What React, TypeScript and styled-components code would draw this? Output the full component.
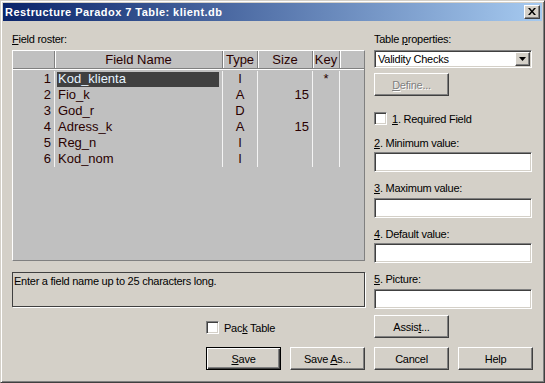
import styled, { createGlobalStyle } from "styled-components";

const GlobalStyle = createGlobalStyle`
  html, body {
    margin: 0;
    padding: 0;
    background: #d4d0c8;
  }
  * {
    box-sizing: border-box;
  }
`;

const Window = styled.div`
  width: 545px;
  height: 383px;
  background: #d4d0c8;
  border-top: 1px solid #d4d0c8;
  border-left: 1px solid #d4d0c8;
  border-right: 1px solid #404040;
  border-bottom: 1px solid #404040;
  box-shadow: inset 1px 1px 0 #fff, inset -1px -1px 0 #808080;
  padding: 2px 2px 0 2px;
  font-family: "Liberation Sans", Arial, sans-serif;
  font-size: 11px;
  letter-spacing: -0.25px;
  color: #000;
  display: flex;
  flex-direction: column;
`;

const TitleBar = styled.div`
  height: 18px;
  display: flex;
  align-items: center;
  justify-content: space-between;
  padding: 0 2px 0 2px;
  background: linear-gradient(to right, #0a246a, #a6caf0);
`;

const TitleText = styled.span`
  color: #fff;
  font-weight: bold;
  font-size: 11px;
  letter-spacing: 0.45px;
`;

const CloseButton = styled.div`
  width: 16px;
  height: 14px;
  background: #d4d0c8;
  border-top: 1px solid #fff;
  border-left: 1px solid #fff;
  border-right: 1px solid #404040;
  border-bottom: 1px solid #404040;
  box-shadow: inset -1px -1px 0 #808080;
  display: flex;
  align-items: center;
  justify-content: center;
  padding-bottom: 1px;
`;

const Body = styled.div`
  display: flex;
  gap: 9px;
  padding: 12px 9px 0 9px;
`;

const LeftColumn = styled.div`
  width: 353px;
  flex-shrink: 0;
  display: flex;
  flex-direction: column;
`;

const RightColumn = styled.div`
  width: 159px;
  flex-shrink: 0;
  display: flex;
  flex-direction: column;
`;

const Label = styled.div<{ $mt?: number }>`
  height: 13px;
  line-height: 13px;
  margin-top: ${({ $mt }) => $mt ?? 0}px;
  white-space: nowrap;
`;

const Grid = styled.div`
  margin-top: 4px;
  height: 211px;
  background: #c0c0c0;
  border-top: 1px solid #fff;
  border-left: 1px solid #fff;
  border-right: 1px solid #808080;
  border-bottom: 1px solid #808080;
  font-size: 13px;
  letter-spacing: 0;
  color: #2a0000;
`;

const HeaderRow = styled.div`
  display: flex;
  height: 18px;
  border-bottom: 1px solid #808080;
  box-shadow: 0 1px 0 #fff;
  margin-bottom: 2px;
`;

const HeaderCell = styled.div<{ $w?: number }>`
  ${({ $w }) => ($w ? `width: ${$w}px;` : "flex: 1;")}
  flex-shrink: 0;
  height: 17px;
  line-height: 17px;
  text-align: center;
  border-right: 1px solid #808080;
  box-shadow: inset 1px 0 0 #fff;
  &:first-child {
    box-shadow: none;
  }
  &:last-child {
    border-right: none;
  }
`;

const DataRow = styled.div`
  display: flex;
  height: 16px;
`;

const DataCell = styled.div<{ $w: number; $align?: string; $pad?: number }>`
  width: ${({ $w }) => $w}px;
  flex-shrink: 0;
  height: 16px;
  line-height: 16px;
  text-align: ${({ $align }) => $align ?? "left"};
  padding: 0 ${({ $pad }) => $pad ?? 0}px;
  border-right: 1px solid #f4f4f4;
  white-space: nowrap;
`;

const NameCell = styled(DataCell)`
  padding: 0 3px 0 2px;
`;

const Highlight = styled.div<{ $on?: boolean }>`
  margin-top: 1px;
  height: 15px;
  line-height: 14px;
  padding-left: 1px;
  background: ${({ $on }) => ($on ? "#404040" : "transparent")};
  color: ${({ $on }) => ($on ? "#e6f4ff" : "inherit")};
`;

const StatusBox = styled.div`
  margin-top: 11px;
  height: 35px;
  border: 1px solid #404040;
  box-shadow: 1px 1px 0 #fff;
  padding: 2px 1px;
  line-height: 13px;
`;

const BottomGroup = styled.div`
  align-self: flex-end;
  width: 159px;
  display: flex;
  flex-direction: column;
`;

const CheckRow = styled.div<{ $mt: number }>`
  display: flex;
  align-items: center;
  gap: 5px;
  margin-top: ${({ $mt }) => $mt}px;
  height: 13px;
`;

const CheckBox = styled.div`
  width: 13px;
  height: 13px;
  background: #fff;
  border-top: 1px solid #808080;
  border-left: 1px solid #808080;
  border-right: 1px solid #fff;
  border-bottom: 1px solid #fff;
  box-shadow: inset 1px 1px 0 #404040, inset -1px -1px 0 #d4d0c8;
`;

const ButtonRow = styled.div<{ $mt: number }>`
  display: flex;
  justify-content: space-between;
  margin-top: ${({ $mt }) => $mt}px;
`;

const Button = styled.div<{ $default?: boolean; $disabled?: boolean; $mt?: number }>`
  width: 75px;
  height: 23px;
  margin-top: ${({ $mt }) => $mt ?? 0}px;
  display: flex;
  align-items: center;
  justify-content: center;
  background: #d4d0c8;
  border: 1px solid ${({ $default }) => ($default ? "#000" : "transparent")};
  box-shadow: ${({ $default }) =>
    $default
      ? "inset 1px 1px 0 #fff, inset -1px -1px 0 #404040, inset -2px -2px 0 #808080"
      : "inset 0 0 0 0 transparent"};
  ${({ $default }) =>
    !$default &&
    `border-top-color: #fff; border-left-color: #fff; border-right-color: #404040; border-bottom-color: #404040; box-shadow: inset -1px -1px 0 #808080;`}
  color: ${({ $disabled }) => ($disabled ? "#808080" : "#000")};
  text-shadow: ${({ $disabled }) => ($disabled ? "1px 1px 0 #fff" : "none")};
`;

const Combo = styled.div`
  margin-top: 4px;
  width: 158px;
  height: 18px;
  background: #fff;
  border-top: 1px solid #808080;
  border-left: 1px solid #808080;
  border-right: 1px solid #fff;
  border-bottom: 1px solid #fff;
  box-shadow: inset 1px 1px 0 #404040, inset -1px -1px 0 #d4d0c8;
  display: flex;
  align-items: center;
  justify-content: space-between;
  padding: 1px 1px 1px 3px;
`;

const ComboArrow = styled.div`
  width: 15px;
  height: 14px;
  background: #d4d0c8;
  border-top: 1px solid #fff;
  border-left: 1px solid #fff;
  border-right: 1px solid #404040;
  border-bottom: 1px solid #404040;
  box-shadow: inset -1px -1px 0 #808080;
  display: flex;
  align-items: center;
  justify-content: center;
`;

const TextInput = styled.div<{ $mt: number }>`
  margin-top: ${({ $mt }) => $mt}px;
  width: 158px;
  height: 20px;
  background: #fff;
  border-top: 1px solid #808080;
  border-left: 1px solid #808080;
  border-right: 1px solid #fff;
  border-bottom: 1px solid #fff;
  box-shadow: inset 1px 1px 0 #404040, inset -1px -1px 0 #d4d0c8;
`;

const U = styled.span`
  text-decoration: underline;
`;

const columns = [42, 168, 35, 55, 27];

const rows = [
  { n: 1, name: "Kod_klienta", type: "I", size: "", key: "*" },
  { n: 2, name: "Fio_k", type: "A", size: "15", key: "" },
  { n: 3, name: "God_r", type: "D", size: "", key: "" },
  { n: 4, name: "Adress_k", type: "A", size: "15", key: "" },
  { n: 5, name: "Reg_n", type: "I", size: "", key: "" },
  { n: 6, name: "Kod_nom", type: "I", size: "", key: "" },
];

const fields = [
  { k: "2", rest: ". Minimum value:", mt: 12, it: 2 },
  { k: "3", rest: ". Maximum value:", mt: 10, it: 3 },
  { k: "4", rest: ". Default value:", mt: 10, it: 2 },
  { k: "5", rest: ". Picture:", mt: 10, it: 3 },
];

export default function App() {
  return (
    <>
      <GlobalStyle />
      <Window>
        <TitleBar>
          <TitleText>Restructure Paradox 7 Table: klient.db</TitleText>
          <CloseButton>
            <svg width="8" height="7" viewBox="0 0 8 7">
              <path d="M0 0h2l2 2.4L6 0h2L5 3.5 8 7H6L4 4.6 2 7H0l3-3.5z" fill="#000" />
            </svg>
          </CloseButton>
        </TitleBar>
        <Body>
          <LeftColumn>
            <Label>
              <U>F</U>ield roster:
            </Label>
            <Grid>
              <HeaderRow>
                <HeaderCell $w={42} />
                <HeaderCell $w={168}>Field Name</HeaderCell>
                <HeaderCell $w={35}>Type</HeaderCell>
                <HeaderCell $w={55}>Size</HeaderCell>
                <HeaderCell $w={27}>Key</HeaderCell>
                <HeaderCell />
              </HeaderRow>
              {rows.map((r) => (
                <DataRow key={r.n}>
                  <DataCell $w={columns[0]} $align="right" $pad={3}>
                    {r.n}
                  </DataCell>
                  <NameCell $w={columns[1]}>
                    <Highlight $on={r.n === 1}>{r.name}</Highlight>
                  </NameCell>
                  <DataCell $w={columns[2]} $align="center">
                    {r.type}
                  </DataCell>
                  <DataCell $w={columns[3]} $align="right" $pad={3}>
                    {r.size}
                  </DataCell>
                  <DataCell $w={columns[4]} $align="center">
                    {r.key}
                  </DataCell>
                </DataRow>
              ))}
            </Grid>
            <StatusBox>Enter a field name up to 25 characters long.</StatusBox>
            <BottomGroup>
              <CheckRow $mt={14}>
                <CheckBox />
                <span>
                  Pac<U>k</U> Table
                </span>
              </CheckRow>
              <ButtonRow $mt={13}>
                <Button $default>
                  <span>
                    <U>S</U>ave
                  </span>
                </Button>
                <Button>
                  <span>
                    Save <U>A</U>s...
                  </span>
                </Button>
              </ButtonRow>
            </BottomGroup>
          </LeftColumn>
          <RightColumn>
            <Label>
              Table <U>p</U>roperties:
            </Label>
            <Combo>
              <span>Validity Checks</span>
              <ComboArrow>
                <svg width="7" height="4" viewBox="0 0 7 4">
                  <path d="M0 0h7L3.5 4z" fill="#000" />
                </svg>
              </ComboArrow>
            </Combo>
            <Button $disabled $mt={5}>
              <span>
                <U>D</U>efine...
              </span>
            </Button>
            <CheckRow $mt={16}>
              <CheckBox />
              <span>
                <U>1</U>. Required Field
              </span>
            </CheckRow>
            {fields.map((f) => (
              <div key={f.k}>
                <Label $mt={f.mt}>
                  <U>{f.k}</U>
                  {f.rest}
                </Label>
                <TextInput $mt={f.it} />
              </div>
            ))}
            <Button $mt={6}>
              <span>
                Assis<U>t</U>...
              </span>
            </Button>
            <ButtonRow $mt={9}>
              <Button>Cancel</Button>
              <Button>Help</Button>
            </ButtonRow>
          </RightColumn>
        </Body>
      </Window>
    </>
  );
}
